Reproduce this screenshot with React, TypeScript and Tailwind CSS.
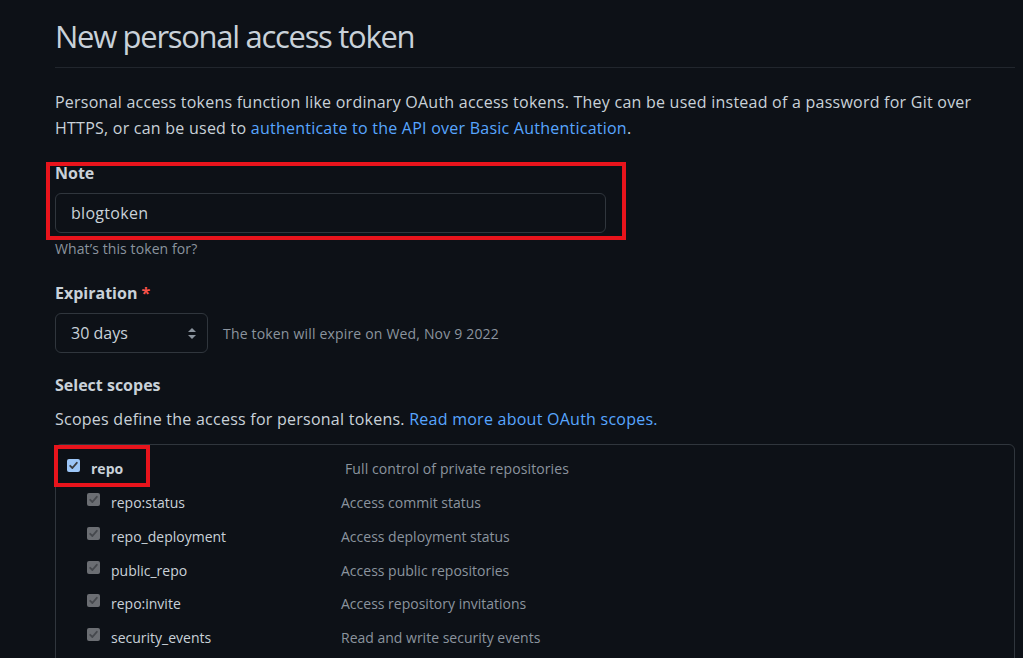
import React from "react";

const font = { fontFamily: "'Open Sans', 'Liberation Sans', sans-serif" };

function Check({ kind }: { kind: "blue" | "gray" }) {
  const bg = kind === "blue" ? "bg-[#9cc6f7]" : "bg-[#6b6e73]";
  const stroke = kind === "blue" ? "#3a3d42" : "#45484d";
  return (
    <span className={`inline-flex h-[13px] w-[13px] shrink-0 items-center justify-center rounded-[2px] ${bg} mb-[6px]`}>
      <svg width="11" height="11" viewBox="0 0 11 11">
        <path d="M2.2 5.8 L4.4 8 L8.8 2.8" fill="none" stroke={stroke} strokeWidth="1.8" strokeLinecap="round" strokeLinejoin="round" />
      </svg>
    </span>
  );
}

const subScopes: [string, string][] = [
  ["repo:status", "Access commit status"],
  ["repo_deployment", "Access deployment status"],
  ["public_repo", "Access public repositories"],
  ["repo:invite", "Access repository invitations"],
  ["security_events", "Read and write security events"],
];

export default function App() {
  return (
    <div className="h-[658px] w-[1023px] overflow-hidden bg-[#0d1117] text-[#c9d1d9]" style={font}>
      <div className="ml-[55px] w-[960px]">
        <div className="border-b border-[#21262d] pt-[16px] pb-[11px]">
          <h1 className="text-[31px] font-normal leading-[40px] tracking-[-1.3px] text-[#c9d1d9]">New personal access token</h1>
        </div>
        <p className="mt-[21px] whitespace-nowrap text-[16px] leading-[26px] tracking-[0.24px]">
          Personal access tokens function like ordinary OAuth access tokens. They can be used instead of a password for Git over
          <br />
          HTTPS, or can be used to <span className="text-[#58a6ff]">authenticate to the API over Basic Authentication</span>.
        </p>

        <div className="relative mt-[20px]">
          <div className="pointer-events-none absolute left-[-9px] top-[1px] h-[78px] w-[580px] border-[4px] border-[#e8141c]" />
          <div className="text-[16px] font-bold leading-[24px]">Note</div>
          <div className="mt-[8px] flex h-[40px] w-[551px] items-center rounded-[6px] border border-[#30363d] bg-[#0d1117] px-[15px] text-[16px] tracking-[0.3px]">
            blogtoken
          </div>
          <div className="mt-[6px] text-[14px] leading-[20px] tracking-[0.1px] text-[#8b949e]">What’s this token for?</div>
        </div>

        <div className="mt-[22px] text-[16px] font-bold leading-[24px]">
          Expiration <span className="text-[#f85149]">*</span>
        </div>
        <div className="mt-[8px] flex items-center">
          <div className="flex h-[40px] w-[153px] items-center justify-between rounded-[6px] border border-[#30363d] pl-[15px] pr-[9px] text-[16px]">
            <span>30 days</span>
            <svg width="12" height="14" viewBox="0 0 12 14">
              <path d="M6 2 L10 6 L2 6 Z" fill="#8b949e" />
              <path d="M6 13 L10 9 L2 9 Z" fill="#8b949e" />
            </svg>
          </div>
          <span className="ml-[15px] text-[14px] tracking-[0.18px] text-[#8b949e]">The token will expire on Wed, Nov 9 2022</span>
        </div>

        <div className="mt-[20px] text-[16px] font-bold leading-[24px]">Select scopes</div>
        <div className="mt-[10px] text-[16px] leading-[24px] tracking-[0.25px]">
          Scopes define the access for personal tokens. <span className="text-[#58a6ff]">Read more about OAuth scopes.</span>
        </div>

        <div className="relative mt-[13px] h-[260px] rounded-t-[6px] border border-[#30363d] pt-[6px]">
          <div className="pointer-events-none absolute left-[-2px] top-[0px] h-[42px] w-[96px] border-[4px] border-[#e8141c]" />
          <div className="flex h-[34px] items-center pl-[11px] text-[14px]">
            <Check kind="blue" />
            <span className="ml-[11px] w-[254px] font-bold">repo</span>
            <span className="tracking-[0.1px] text-[#8b949e]">Full control of private repositories</span>
          </div>
          <div className="h-[1px]" />
          {subScopes.map(([name, desc]) => (
            <div key={name} className="flex h-[33.7px] items-center pl-[31px] text-[14px]">
              <Check kind="gray" />
              <span className="ml-[11px] w-[230px]">{name}</span>
              <span className="text-[#8b949e]">{desc}</span>
            </div>
          ))}
        </div>
      </div>
    </div>
  );
}
